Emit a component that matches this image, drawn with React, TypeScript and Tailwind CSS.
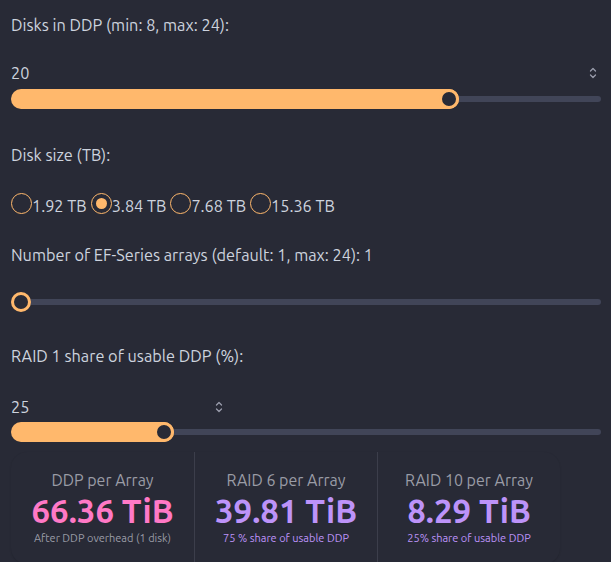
import React from "react";

function Spinner() {
  return (
    <svg width="8" height="14" viewBox="0 0 8 14" fill="none" stroke="#9a9cab" strokeWidth="1.3" strokeLinecap="round" strokeLinejoin="round">
      <path d="M1.5 5 L4 2.5 L6.5 5" />
      <path d="M1.5 9 L4 11.5 L6.5 9" />
    </svg>
  );
}

function Slider({ frac }: { frac: number }) {
  const center = 10 + frac * 570;
  return (
    <div className="relative h-5 w-full">
      <div className="absolute left-0 right-0 top-[7px] h-[6px] rounded-full bg-[#414558]" />
      {frac > 0 && (
        <div
          className="absolute left-0 top-0 h-5 rounded-full bg-[#ffb86c]"
          style={{ width: center + 10 }}
        />
      )}
      <div
        className="absolute top-0 h-5 w-5 rounded-full border-[3px] border-[#ffb86c] bg-[#282a36]"
        style={{ left: center - 10 }}
      />
    </div>
  );
}

function Radio({ checked, label }: { checked: boolean; label: string }) {
  return (
    <label className="flex items-center">
      <span
        className={
          checked
            ? "flex h-[21px] w-[21px] items-center justify-center rounded-full border border-[#ffb86c]"
            : "h-[21px] w-[21px] rounded-full border border-[#ffb86c]"
        }
      >
        {checked && <span className="h-[11px] w-[11px] rounded-full bg-[#ffb86c]" />}
      </span>
      <span className="mt-[5px]">{label}</span>
    </label>
  );
}

function Stat({
  title,
  value,
  desc,
  valueColor,
  descColor,
  border,
}: {
  title: string;
  value: string;
  desc: string;
  valueColor: string;
  descColor: string;
  border: boolean;
}) {
  return (
    <div
      className={
        "flex w-[183px] flex-col items-center pt-4 " +
        (border ? "border-l border-[#3c3e4b]" : "")
      }
    >
      <div className="text-[16px] leading-6 text-[#9a9ca6]">{title}</div>
      <div className={"text-[33px] font-bold leading-[38px] " + valueColor}>{value}</div>
      <div className={"text-[11px] leading-4 " + descColor}>{desc}</div>
    </div>
  );
}

export default function App() {
  return (
    <div className="min-h-[562px] w-[611px] overflow-hidden bg-[#282a36] px-[11px] pt-[13px] font-['Ubuntu','Noto_Sans',sans-serif] text-[16.3px] text-[#cdd3de]">
      <div className="flex w-[590px] flex-col">
        <div className="h-6 leading-6">Disks in DDP (min: 8, max: 24):</div>
        <div className="mt-6 flex h-6 items-center justify-between leading-6">
          <span>20</span>
          <span className="mr-[4px] flex items-center">
            <Spinner />
          </span>
        </div>
        <div className="mt-1">
          <Slider frac={0.75} />
        </div>

        <div className="mt-[34px] h-6 leading-6">Disk size (TB):</div>
        <div className="mt-6 flex h-6 items-center gap-[4px] leading-6">
          <Radio checked={false} label="1.92 TB" />
          <Radio checked={true} label="3.84 TB" />
          <Radio checked={false} label="7.68 TB" />
          <Radio checked={false} label="15.36 TB" />
        </div>

        <div className="mt-7 h-6 leading-6">Number of EF-Series arrays (default: 1, max: 24): 1</div>
        <div className="mt-[25px]">
          <Slider frac={0} />
        </div>

        <div className="mt-8 h-6 leading-6">RAID 1 share of usable DDP (%):</div>
        <div className="mt-[27px] flex h-6 w-[212px] items-center justify-between leading-6">
          <span>25</span>
          <Spinner />
        </div>
        <div className="mt-[3px]">
          <Slider frac={0.25} />
        </div>

        <div className="mt-[10px] flex h-[112px] w-[549px] rounded-2xl bg-[#282a36] shadow-[0_1px_2px_rgba(0,0,0,0.12)]">
          <Stat
            title="DDP per Array"
            value="66.36 TiB"
            desc="After DDP overhead (1 disk)"
            valueColor="text-[#ff79c6]"
            descColor="text-[#9a9ca6]"
            border={false}
          />
          <Stat
            title="RAID 6 per Array"
            value="39.81 TiB"
            desc="75 % share of usable DDP"
            valueColor="text-[#bd93f9]"
            descColor="text-[#bd93f9]"
            border={true}
          />
          <Stat
            title="RAID 10 per Array"
            value="8.29 TiB"
            desc="25% share of usable DDP"
            valueColor="text-[#bd93f9]"
            descColor="text-[#bd93f9]"
            border={true}
          />
        </div>
      </div>
    </div>
  );
}
